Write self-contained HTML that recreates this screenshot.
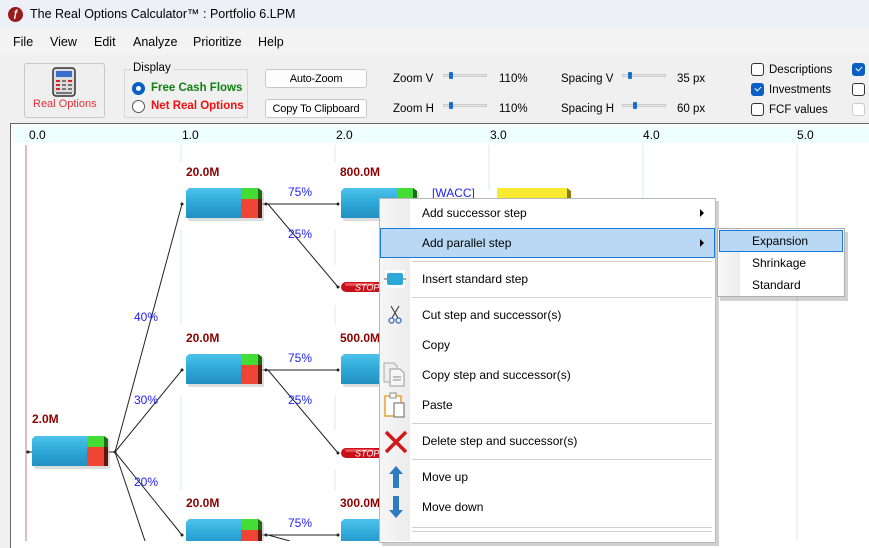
<!DOCTYPE html>
<html><head><meta charset="utf-8"><style>
*{margin:0;padding:0;box-sizing:border-box}
body{width:869px;height:541px;overflow:hidden;position:relative;background:#f0f0f0;font-family:"Liberation Sans",sans-serif;font-size:11.5px;color:#000}
.a{position:absolute;white-space:nowrap}
.btn{position:absolute;background:#fdfdfd;border:1px solid #c8c8c8;border-radius:3px;text-align:center;font-size:11px;line-height:18px;letter-spacing:-0.2px}
.chk{position:absolute;width:13px;height:13px;border:1px solid #333;border-radius:3px;background:#fff}
.chk.on{background:#0a5fc4;border-color:#0a5fc4}
.chk.on:after{content:"";position:absolute;left:3px;top:2px;width:5px;height:3px;border-left:1.3px solid #fff;border-bottom:1.3px solid #fff;transform:rotate(-45deg)}
.sl{position:absolute;width:44px;height:10px}
.sl .tr{position:absolute;left:0;top:2px;width:44px;height:3px;background:#e6e6e6;border:1px solid #ccc}
.sl .th{position:absolute;top:0;width:4px;height:7px;background:#1a6fd0;border-radius:1px}
.mi{position:absolute;left:422px;font-size:12px}
.sep{position:absolute;left:412px;width:300px;height:1px;background:#d0d0d0}
</style></head><body>
<div class="a" style="left:0;top:0;width:869px;height:29px;background:#eef0f7"></div>
<div class="a" style="left:8px;top:7px;width:15px;height:15px;border-radius:50%;background:#9b1a1a;color:#fff;font-size:10px;font-weight:bold;text-align:center;line-height:15px;font-style:italic">ƒ</div>
<div class="a" style="left:30px;top:7px;font-size:12.5px">The Real Options Calculator™ :  Portfolio 6.LPM</div>
<div class="a" style="left:0;top:29px;width:869px;height:26px;background:#f3f3f3"></div>
<div class="a" style="left:13px;top:35px;font-size:12.5px">File</div>
<div class="a" style="left:50px;top:35px;font-size:12.5px">View</div>
<div class="a" style="left:94px;top:35px;font-size:12.5px">Edit</div>
<div class="a" style="left:133px;top:35px;font-size:12.5px">Analyze</div>
<div class="a" style="left:193px;top:35px;font-size:12.5px">Prioritize</div>
<div class="a" style="left:258px;top:35px;font-size:12.5px">Help</div>
<div class="a" style="left:24px;top:63px;width:81px;height:55px;border:1px solid #c8c8c8;border-radius:3px;background:#efefef"></div>
<svg class="a" style="left:52px;top:67px" width="24" height="30"><rect x="1" y="1" width="22" height="28" rx="3" fill="#ddd" stroke="#333" stroke-width="1.5"/><rect x="4" y="4" width="16" height="6" fill="#3a6fd0"/><g fill="#d22"><rect x="4" y="13" width="4" height="2"/><rect x="4" y="17" width="4" height="2"/><rect x="4" y="21" width="4" height="2"/><rect x="16" y="13" width="4" height="2"/></g><g fill="#777"><rect x="10" y="13" width="4" height="2"/><rect x="10" y="17" width="4" height="2"/><rect x="16" y="17" width="4" height="2"/><rect x="10" y="21" width="4" height="2"/><rect x="16" y="21" width="4" height="2"/><rect x="4" y="25" width="16" height="2"/></g></svg>
<div class="a" style="left:33px;top:98px;color:#e8303a;font-size:11px">Real Options</div>
<div class="a" style="left:124px;top:69px;width:124px;height:49px;border:1px solid #d6d6d6"></div>
<div class="a" style="left:131px;top:62px;background:#f0f0f0;padding:0 2px;font-size:11.5px">Display</div>
<div class="a" style="left:132px;top:82px;width:13px;height:13px;border-radius:50%;background:#0a5fc4"><div style="position:absolute;left:4px;top:4px;width:5px;height:5px;border-radius:50%;background:#fff"></div></div>
<div class="a" style="left:151px;top:82px;color:#128012;font-weight:bold;font-size:11.5px">Free Cash Flows</div>
<div class="a" style="left:132px;top:100px;width:13px;height:13px;border-radius:50%;border:1px solid #555;background:#fff"></div>
<div class="a" style="left:151px;top:100px;color:#f01010;font-weight:bold;font-size:11.5px">Net Real Options</div>
<div class="btn" style="left:265px;top:69px;width:102px;height:19px">Auto-Zoom</div>
<div class="btn" style="left:265px;top:99px;width:102px;height:19px">Copy To Clipboard</div>
<div class="a" style="left:393px;top:73px">Zoom V</div>
<div class="a" style="left:393px;top:103px">Zoom H</div>
<div class="sl" style="left:443px;top:72px"><div class="tr"></div><div class="th" style="left:6px"></div></div>
<div class="sl" style="left:443px;top:102px"><div class="tr"></div><div class="th" style="left:6px"></div></div>
<div class="a" style="left:499px;top:73px">110%</div>
<div class="a" style="left:499px;top:103px">110%</div>
<div class="a" style="left:561px;top:73px">Spacing V</div>
<div class="a" style="left:561px;top:103px">Spacing H</div>
<div class="sl" style="left:622px;top:72px"><div class="tr"></div><div class="th" style="left:6px"></div></div>
<div class="sl" style="left:622px;top:102px"><div class="tr"></div><div class="th" style="left:11px"></div></div>
<div class="a" style="left:677px;top:73px">35 px</div>
<div class="a" style="left:677px;top:103px">60 px</div>
<div class="chk" style="left:751px;top:63px"></div><div class="a" style="left:769px;top:64px">Descriptions</div>
<div class="chk on" style="left:751px;top:83px"></div><div class="a" style="left:769px;top:84px">Investments</div>
<div class="chk" style="left:751px;top:103px"></div><div class="a" style="left:769px;top:104px">FCF values</div>
<div class="chk on" style="left:852px;top:63px"></div>
<div class="chk" style="left:852px;top:83px"></div>
<div class="chk" style="left:852px;top:103px;border-color:#ccc"></div>
<div class="a" style="left:10px;top:123px;width:859px;height:425px;background:#fff;border-left:1px solid #666;border-top:1px solid #666"></div>
<div class="a" style="left:13px;top:127px;width:856px;height:16px;background:#effefe"></div>
<div class="a" style="left:29px;top:128px;font-size:12px">0.0</div>
<div class="a" style="left:182px;top:128px;font-size:12px">1.0</div>
<div class="a" style="left:336px;top:128px;font-size:12px">2.0</div>
<div class="a" style="left:490px;top:128px;font-size:12px">3.0</div>
<div class="a" style="left:643px;top:128px;font-size:12px">4.0</div>
<div class="a" style="left:797px;top:128px;font-size:12px">5.0</div>
<svg class="a" style="left:0;top:0" width="869" height="541">
<defs>
<linearGradient id="bg" x1="0" y1="0" x2="0" y2="1"><stop offset="0" stop-color="#4cc3ea"/><stop offset="0.5" stop-color="#2ea8d8"/><stop offset="1" stop-color="#2290c0"/></linearGradient>
<g id="box"><rect x="2" y="3" width="76" height="30" rx="2" fill="#bbb" opacity="0.5"/><path d="M3 0H72L74 3V30H0V3Z" fill="url(#bg)"/><rect x="56" y="0" width="16" height="11" fill="#44dd33"/><rect x="55" y="11" width="17" height="19" fill="#f04434"/><path d="M72 0L76 3V30H72Z" fill="#5a1a10"/><path d="M72 0L76 3V11H72Z" fill="#1f6a18"/></g>
<g id="stop"><rect x="0" y="0" width="50" height="10" rx="5" fill="#c8101a"/><rect x="4" y="1" width="30" height="3" rx="1.5" fill="#f66" opacity="0.7"/><text x="14" y="8.5" font-size="9" font-style="italic" fill="#fff" font-family="Liberation Sans">STOP</text></g>
</defs>
<g stroke="#d8e8f0" stroke-width="1">
<line x1="181" y1="145" x2="181" y2="162"/><line x1="181" y1="230" x2="181" y2="325"/><line x1="181" y1="395" x2="181" y2="490"/>
<line x1="335" y1="145" x2="335" y2="162"/><line x1="335" y1="230" x2="335" y2="265"/><line x1="335" y1="305" x2="335" y2="325"/><line x1="335" y1="395" x2="335" y2="430"/><line x1="335" y1="470" x2="335" y2="490"/>
<line x1="489" y1="145" x2="489" y2="190"/><line x1="643" y1="145" x2="643" y2="541"/><line x1="797" y1="145" x2="797" y2="541"/>
</g>
<line x1="26" y1="145" x2="26" y2="541" stroke="#c87878"/>
<g stroke="#222" stroke-width="1" fill="none">
<line x1="26" y1="452" x2="32" y2="452"/><line x1="108" y1="452" x2="115" y2="452"/>
<line x1="115" y1="452" x2="182" y2="204"/><line x1="115" y1="452" x2="182" y2="370"/><line x1="115" y1="452" x2="182" y2="535"/><line x1="115" y1="452" x2="145" y2="541"/>
<line x1="262" y1="204" x2="338" y2="204"/><line x1="268" y1="204" x2="338" y2="287"/>
<line x1="262" y1="370" x2="338" y2="370"/><line x1="268" y1="370" x2="338" y2="453"/>
<line x1="262" y1="535" x2="338" y2="535"/><line x1="268" y1="535" x2="290" y2="541"/>
</g>
<g fill="#222"><circle cx="28" cy="452" r="1.5"/><circle cx="115" cy="452" r="1.5"/><circle cx="182" cy="204" r="1.5"/><circle cx="182" cy="370" r="1.5"/><circle cx="182" cy="535" r="1.5"/><circle cx="266" cy="204" r="1.5"/><circle cx="266" cy="370" r="1.5"/><circle cx="266" cy="535" r="1.5"/><circle cx="338" cy="204" r="1.5"/><circle cx="338" cy="287" r="1.5"/><circle cx="338" cy="370" r="1.5"/><circle cx="338" cy="453" r="1.5"/><circle cx="338" cy="535" r="1.5"/></g>
<use href="#box" x="32" y="436"/>
<use href="#box" x="186" y="188"/><use href="#box" x="186" y="354"/><use href="#box" x="186" y="519"/>
<use href="#box" x="341" y="188"/><use href="#box" x="341" y="354"/><use href="#box" x="341" y="519"/>
<use href="#stop" x="341" y="282"/><use href="#stop" x="341" y="448"/>
<rect x="497" y="188" width="70" height="12" fill="#f8ea30"/><path d="M567 188L571 191V200H567Z" fill="#8a7a10"/>
<g font-family="Liberation Sans" font-size="12" font-weight="bold" fill="#8b0000">
<text x="32" y="423">2.0M</text><text x="186" y="176">20.0M</text><text x="186" y="342">20.0M</text><text x="186" y="507">20.0M</text>
<text x="340" y="176">800.0M</text><text x="340" y="342">500.0M</text><text x="340" y="507">300.0M</text>
</g>
<g font-family="Liberation Sans" font-size="12" fill="#2020ff">
<text x="134" y="321">40%</text><text x="134" y="404">30%</text><text x="134" y="486">20%</text>
<text x="288" y="196">75%</text><text x="288" y="238">25%</text><text x="288" y="362">75%</text><text x="288" y="404">25%</text><text x="288" y="527">75%</text>
<text x="432" y="197">[WACC]</text>
</g>
</svg>
<div class="a" style="left:382px;top:201px;width:337px;height:345px;background:rgba(0,0,0,0.18)"></div>
<div class="a" style="left:379px;top:198px;width:337px;height:345px;background:#fff;border:1px solid #b8b8b8"></div>
<div class="a" style="left:380px;top:199px;width:30px;height:342px;background:linear-gradient(90deg,#f6f6f6,#ececec)"></div>
<div class="a" style="left:380px;top:228px;width:335px;height:30px;background:#b8d8f4;border:1px solid #1a7ad8"></div>
<div class="mi" style="top:206px">Add successor step</div>
<div class="a" style="left:700px;top:209px;width:0;height:0;border-left:4px solid #000;border-top:4px solid transparent;border-bottom:4px solid transparent"></div>
<div class="mi" style="top:236px">Add parallel step</div>
<div class="a" style="left:700px;top:239px;width:0;height:0;border-left:4px solid #000;border-top:4px solid transparent;border-bottom:4px solid transparent"></div>
<div class="sep" style="top:261px"></div>
<svg class="a" style="left:383px;top:268px" width="24" height="22"><rect x="2" y="2" width="20" height="18" fill="#fff"/><rect x="4" y="5" width="16" height="12" rx="2" fill="#2ea8d8"/><line x1="1" y1="11" x2="4" y2="11" stroke="#555"/><line x1="20" y1="11" x2="23" y2="11" stroke="#555"/></svg>
<div class="mi" style="top:272px">Insert standard step</div>
<div class="sep" style="top:297px"></div>
<svg class="a" style="left:387px;top:305px" width="16" height="20"><path d="M4 1L11 13M12 1L5 13" stroke="#444" stroke-width="1.2" fill="none"/><circle cx="4.5" cy="15.5" r="2.5" stroke="#3a6fc0" fill="none" stroke-width="1.3"/><circle cx="11.5" cy="15.5" r="2.5" stroke="#3a6fc0" fill="none" stroke-width="1.3"/></svg>
<div class="mi" style="top:308px">Cut step and successor(s)</div>
<div class="mi" style="top:338px">Copy</div>
<svg class="a" style="left:383px;top:362px" width="24" height="26"><path d="M1 1H11L14 4V20H1Z" fill="#eee" stroke="#aaa"/><path d="M7 7H17L21 11V24H7Z" fill="#f6f6f6" stroke="#999"/><line x1="10" y1="15" x2="18" y2="15" stroke="#888"/><line x1="10" y1="18" x2="18" y2="18" stroke="#888"/></svg>
<div class="mi" style="top:368px">Copy step and successor(s)</div>
<svg class="a" style="left:383px;top:392px" width="24" height="26"><rect x="2" y="4" width="16" height="20" fill="#fff" stroke="#e8a030" stroke-width="1.5"/><rect x="7" y="1" width="6" height="5" fill="#fff" stroke="#888"/><rect x="11" y="11" width="10" height="14" fill="#fff" stroke="#666"/></svg>
<div class="mi" style="top:398px">Paste</div>
<div class="sep" style="top:423px"></div>
<svg class="a" style="left:384px;top:430px" width="24" height="24"><path d="M2 2L22 22M22 2L2 22" stroke="#d01818" stroke-width="3.5"/></svg>
<div class="mi" style="top:434px">Delete step and successor(s)</div>
<div class="sep" style="top:459px"></div>
<svg class="a" style="left:388px;top:465px" width="16" height="24"><path d="M8 1L15 9H11V23H5V9H1Z" fill="#2f7ac0"/></svg>
<div class="mi" style="top:470px">Move up</div>
<svg class="a" style="left:388px;top:495px" width="16" height="24"><path d="M8 23L15 15H11V1H5V15H1Z" fill="#2f7ac0"/></svg>
<div class="mi" style="top:500px">Move down</div>
<div class="sep" style="top:527px"></div>
<div class="sep" style="top:531px"></div>
<div class="a" style="left:720px;top:232px;width:128px;height:69px;background:rgba(0,0,0,0.18)"></div>
<div class="a" style="left:717px;top:228px;width:128px;height:69px;background:#fff;border:1px solid #b0b0b0"></div>
<div class="a" style="left:718px;top:229px;width:22px;height:67px;background:linear-gradient(90deg,#f8f8f8,#ececec)"></div>
<div class="a" style="left:719px;top:230px;width:124px;height:22px;background:#b8d8f4;border:1px solid #1a7ad8"></div>
<div class="a" style="left:752px;top:234px;font-size:12px">Expansion</div>
<div class="a" style="left:752px;top:256px;font-size:12px">Shrinkage</div>
<div class="a" style="left:752px;top:278px;font-size:12px">Standard</div>
</body></html>
